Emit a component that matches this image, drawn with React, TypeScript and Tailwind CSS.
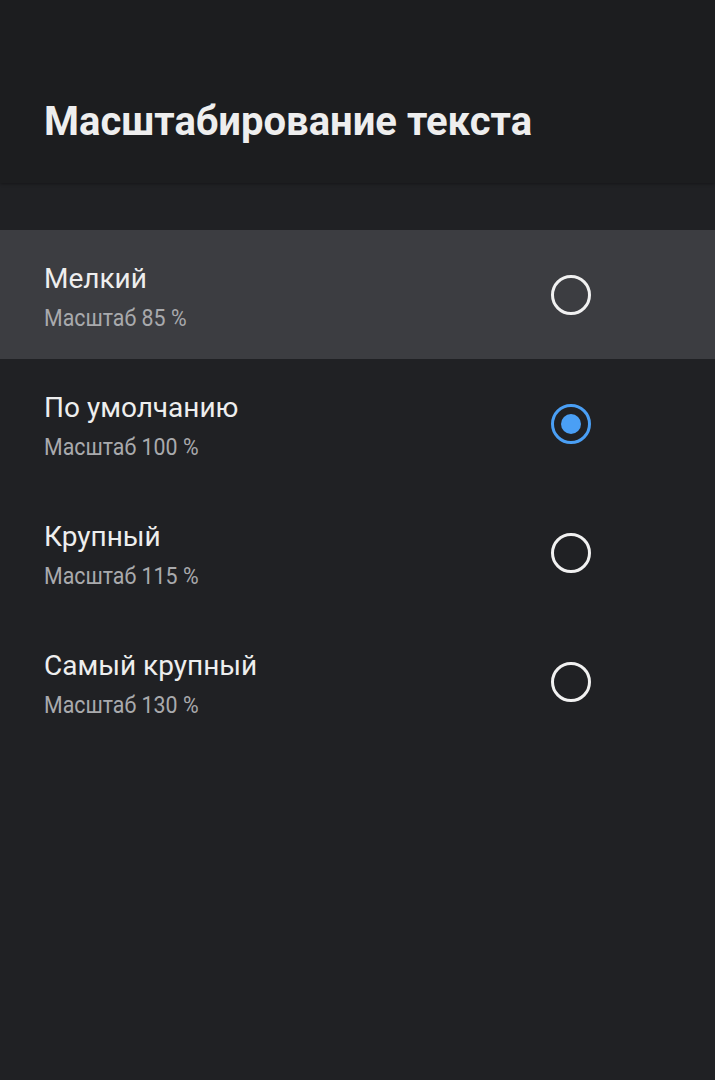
const options = [
  { title: "Мелкий", scale: "Масштаб 85 %", checked: false, focused: true },
  { title: "По умолчанию", scale: "Масштаб 100 %", checked: true, focused: false },
  { title: "Крупный", scale: "Масштаб 115 %", checked: false, focused: false },
  { title: "Самый крупный", scale: "Масштаб 130 %", checked: false, focused: false },
];

const Radio = ({ checked }: { checked: boolean }) => {
  if (checked) {
    return (
      <div className="size-[40px] rounded-full border-[3px] border-[#4a9ff5] flex items-center justify-center">
        <div className="size-[20px] rounded-full bg-[#4a9ff5]"></div>
      </div>
    );
  }
  return <div className="size-[40px] rounded-full border-[3px] border-[#f1f1f1]"></div>;
};

const App = () => {
  return (
    <div className="w-[715px] h-[1080px] bg-[#202124] font-['Roboto',sans-serif] overflow-hidden">
      <header className="h-[183px] bg-[#1c1d1f] flex items-center pl-[44px] pt-[60px] shadow-[0_1px_3px_rgba(0,0,0,0.35)] relative">
        <h1 className="text-[40px] font-bold text-[#eeeeee] tracking-normal">Масштабирование текста</h1>
      </header>
      <div className="pt-[47px]">
        {options.map((o) => (
          <div
            key={o.title}
            className={`h-[129px] flex items-center justify-between pl-[44px] pr-[124px] ${o.focused ? "bg-[#3c3d41]" : ""}`}
          >
            <div className="flex flex-col pt-[6px]">
              <span className="text-[28px] leading-[34px] text-[#eeeeee]">{o.title}</span>
              <span className="text-[24px] leading-[30px] text-[#a9aaad] mt-[7px] origin-left scale-x-[0.89]">{o.scale}</span>
            </div>
            <Radio checked={o.checked} />
          </div>
        ))}
      </div>
    </div>
  );
};

export default App;
